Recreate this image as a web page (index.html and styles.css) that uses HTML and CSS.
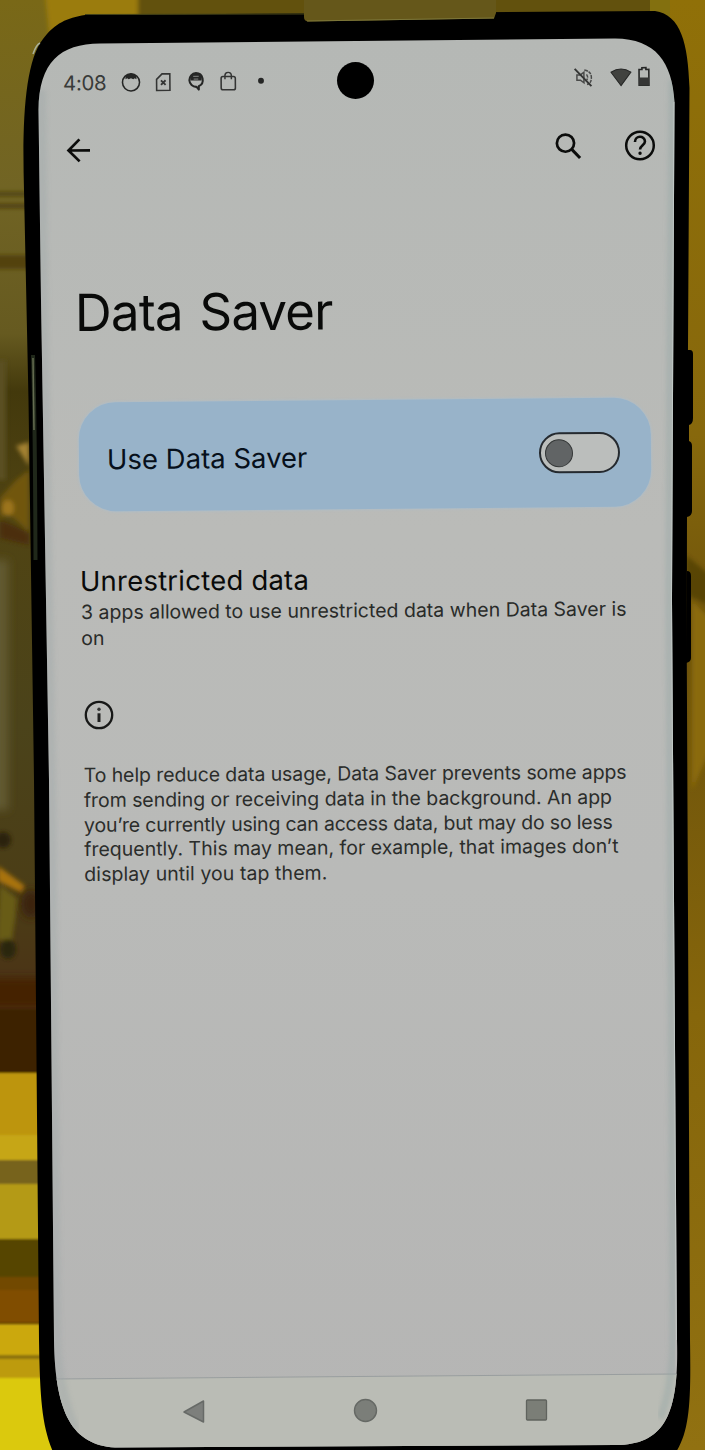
FILE: index.html
```html
<!DOCTYPE html>
<html lang="en">
<head>
<meta charset="utf-8">
<title>Data Saver</title>
<link rel="stylesheet" href="styles.css">
</head>
<body>
<div class="page">
<svg class="scene" viewBox="0 0 705 1450" aria-hidden="true">
  <defs>
    <linearGradient id="wall" x2="0" y2="1">
      <stop offset="0" stop-color="#796817"/><stop offset=".13" stop-color="#716424"/><stop offset=".23" stop-color="#665a20"/><stop offset=".27" stop-color="#43390c"/><stop offset=".36" stop-color="#504413"/><stop offset=".5" stop-color="#4b431a"/><stop offset=".62" stop-color="#4b3d16"/><stop offset=".7" stop-color="#4b3016"/><stop offset=".735" stop-color="#3b2004"/>
    </linearGradient>
    <linearGradient id="right" x2="0" y2="1">
      <stop offset="0" stop-color="#907008"/><stop offset=".3" stop-color="#87680c"/><stop offset=".45" stop-color="#6c520c"/><stop offset=".7" stop-color="#86660b"/><stop offset="1" stop-color="#917111"/>
    </linearGradient>
    <linearGradient id="glass" x2="0" y2="1">
      <stop offset="0" stop-color="#b5b8b5"/><stop offset=".35" stop-color="#babbb8"/><stop offset=".6" stop-color="#b9bab8"/><stop offset="1" stop-color="#b5b5b4"/>
    </linearGradient>
    <filter id="soft"><feGaussianBlur stdDeviation="2"/></filter>
    <filter id="softer" x="-200%" width="500%"><feGaussianBlur stdDeviation="4"/></filter>
    <filter id="slight"><feGaussianBlur stdDeviation="0 1.2"/></filter>
    <clipPath id="screen"><path id="shape" d="M100 43.500L615 38.500C656 39 672 62 674.500 102L672 600L677 1340C679 1412 666 1445 616 1445L115 1447.500C73 1445 55 1414 54 1340L49 780L41 300L38.500 110C39 62 60 44 100 43.500Z"/></clipPath>
  </defs>
  <rect width="705" height="1450" fill="url(#wall)"/>
  <g filter="url(#soft)">
    <path d="M45-5H145V60H52Z" fill="#9b7c0d"/>
    <rect x="138" y="-5" width="520" height="40" fill="#625109"/>
    <rect x="-5" y="192" width="40" height="4" fill="#4b3f0e"/><rect x="-5" y="204" width="40" height="4" fill="#483b0d"/>
    <rect x="-5" y="255" width="40" height="14" fill="#53430e"/>
    <path d="M-5 360H6V480H-5Z" fill="#5a4f24"/>
    <path d="M0 498L16 480L29 470V532L16 520L6 512L0 520Z" fill="#71570e"/>
    <path d="M16 446L29 442V466Z" fill="#a48232"/>
    <ellipse cx="8" cy="508" rx="6" ry="8" fill="#9c751f"/>
    <path d="M0 520L15 526L29 533V545L0 538Z" fill="#4b2f08"/>
    <ellipse cx="3" cy="840" rx="8" ry="8" fill="#2b2408"/>
    <path d="M-2 866L25 886L22 893L-2 881Z" fill="#a9730f"/>
    <path d="M0 885L18 899L12 940H-3Z" fill="#685b15"/>
    <ellipse cx="8" cy="949" rx="8" ry="10" fill="#2c2508"/>
  </g>
  <g filter="url(#softer)">
    <path d="M-8 560H8V810H-8Z" fill="#625a33"/>
    <ellipse cx="31" cy="904" rx="10" ry="14" fill="#3a2209"/>
    <rect x="-15" y="978" width="70" height="30" fill="#452402"/>
  </g>
  <g filter="url(#slight)">
    <rect y="1009" width="60" height="64" fill="#3d2103"/>
    <rect y="1073" width="60" height="90" fill="#bd950a"/><rect y="1135" width="60" height="25" fill="#c6a612"/>
    <rect y="1160" width="60" height="24" fill="#77631c"/><rect y="1184" width="60" height="55" fill="#b49a16"/>
    <rect y="1239" width="60" height="38" fill="#574506"/><rect y="1277" width="60" height="18" fill="#724906"/><rect y="1290" width="60" height="33" fill="#804d04"/>
    <rect y="1324" width="60" height="32" fill="#cba808"/><rect y="1355" width="60" height="4" fill="#8c7207"/>
    <rect y="1359" width="60" height="19" fill="#bd9b08"/><rect y="1378" width="80" height="80" fill="#dbc90e"/>
  </g>
  <rect x="650" width="55" height="1450" fill="url(#right)"/>
  <rect x="650" width="20" height="60" fill="#83700f"/>
  <g filter="url(#soft)"><path d="M686 555L710 575V605L686 595Z" fill="#4d3d08" opacity=".7"/><path d="M692 601L710 618V750L692 790Z" fill="#8a6a11"/></g>
  <path d="M687 350H690Q693 350 693 354V418Q693 424 689 425V441Q692 442 692 446V511Q692 516 687 517V571Q691 571 691 576V658Q691 662 686 663Z"/>
  <path d="M85 15L655 11C681 15 688 43 689.500 88L686.500 600L690 1340C691 1400 690 1430 676 1452H53C42 1425 40 1400 39 1340L34 780L28.500 400L24 190C22 120 25 62 43 39C55 23 67 18 85 15Z"/>
  <path d="M85 14.500L304 14" stroke="#414019" fill="none"/>
  <path d="M304-2H496V13L494 18.500L308 21.500Q304 21 304 17Z" fill="#65571a"/><path d="M307 21L494 18" stroke="#7d773a" fill="none"/>
  <path d="M33 355Q35 420 35.500 560" stroke="#20281a" stroke-width="4" fill="none"/><path d="M33 358L34 430" stroke="#646c50" stroke-width="1.500"/>
  <path d="M33 54Q36 45 40 43" stroke="#a9b09a" stroke-width="1.500" fill="none"/>
  <use href="#shape" fill="url(#glass)"/>
  <g clip-path="url(#screen)">
    <path d="M54 1379L356 1376.500L678 1374V1450H54Z" fill="#babcb5"/>
    <path d="M54 1379L356 1376.500L678 1374" stroke="#999e9f" fill="none"/>
    <path d="M41 90L43 300L51 780L56 1340Q58 1390 75 1430" stroke="#9fa7a8" stroke-width="10" opacity=".4" fill="none" filter="url(#soft)"/>
    <path d="M672 80L670 350L669 600L673 1340Q672 1390 660 1418" stroke="#9aa9a7" stroke-width="7" opacity=".5" fill="none" filter="url(#soft)"/>
    <path d="M674.500 102L672 600L677 1340" stroke="#c9d2cf" stroke-width="2" opacity=".7" fill="none"/>
  </g>
  <circle cx="355.500" cy="80.500" r="18.500"/>
</svg>

<main class="screen">
  <header class="status tilt">
    <div class="status-left">
      <span class="clock">4:08</span>
      <svg viewBox="0 0 24 24" class="mini"><circle cx="12" cy="12.500" r="9.300" fill="none" stroke="#252625" stroke-width="1.700"/><path d="M6 5.500Q12 0 18 5.500V9L16 8L14.500 9L12 8L9.500 9L8 8L6 9Z" fill="#252625"/></svg>
      <svg viewBox="0 0 24 24" class="mini"><path d="M11 3.500H19.500V21.500H5V9.500Z" fill="none" stroke="#343534" stroke-width="1.700"/><path d="M9.800 10.500L14.800 15.500M14.800 10.500L9.800 15.500" stroke="#343534" stroke-width="2"/></svg>
      <svg viewBox="0 0 24 24" class="mini"><path d="M12 3A7.500 7.500 0 1 0 12.500 18L15 21V17.300A7.500 7.500 0 0 0 12 3Z" fill="none" stroke="#252625" stroke-width="2.200" stroke-linejoin="round"/><path d="M5.500 7Q12-1 18.500 7L18 11H6Z" fill="#252625"/><path d="M9 6.500H15M9.500 9.500H14.500" stroke="#8c8e8b" fill="none"/></svg>
      <svg viewBox="0 0 24 24" class="mini"><rect x="4.500" y="7" width="15.500" height="14.500" rx="2" fill="none" stroke="#343534" stroke-width="1.700"/><path d="M8.700 10V6A3.500 3.500 0 0 1 15.700 6V10" fill="none" stroke="#343534" stroke-width="1.600"/></svg>
      <svg viewBox="0 0 24 24" class="mini"><circle cx="12" cy="12" r="3.200" fill="#252625"/></svg>
    </div>
    <div class="status-right">
      <svg class="mute" viewBox="0 0 24 24"><path d="M4.500 9H8.500L12.500 6V18L8.500 15H4.500Z" fill="none" stroke="#494a49" stroke-width="1.700"/><path d="M13 3.500Q21 5 21 12T16 20M15.500 8.500Q18 12 15.500 15" fill="none" stroke="#494a49" stroke-width="1.700" stroke-dasharray="4 1"/><path d="M2 2L21 22" stroke="#343534" stroke-width="2.200"/></svg>
      <svg class="wifi" viewBox="0 0 22 19"><path d="M1 4.500Q11-2 21 4.500L11 18Z" fill="#41423f" stroke="#252625"/></svg>
      <svg class="battery" viewBox="0 0 12 20"><path d="M4 3V1.200H8V3H10.900V18.800H1.100V3Z" fill="none" stroke="#252625" stroke-width="1.600"/><path d="M1 11H11V19H1Z" fill="#353635"/></svg>
    </div>
  </header>

  <nav class="appbar tilt">
    <svg class="back" viewBox="0 0 26 26"><path d="M24 13H2.500M13.500 2L2.500 13L13.500 24" fill="none" stroke="#0b0c0b" stroke-width="2.700"/></svg>
    <svg class="search" viewBox="0 0 28 28"><circle cx="11.500" cy="11" r="8.600" fill="none" stroke="#0b0c0b" stroke-width="2.700"/><path d="M17.500 17L26 26" stroke="#0b0c0b" stroke-width="3"/></svg>
    <svg class="help" viewBox="0 0 32 32"><circle cx="16" cy="16" r="13.800" fill="none" stroke="#0b0c0b" stroke-width="2.500"/><path d="M11 12.500C11 5.500 21 5.800 21 12C21 15.500 16 16 16 20" fill="none" stroke="#0b0c0b" stroke-width="2.600"/><circle cx="16" cy="23.800" r="1.700" fill="#0b0c0b"/></svg>
  </nav>

  <h1 class="title tilt-text">Data Saver</h1>

  <section class="card tilt">
    <span class="card-label">Use Data Saver</span>
    <span class="toggle"><span class="knob"></span></span>
  </section>

  <section class="unrestricted tilt-text">
    <h2 class="heading">Unrestricted data</h2>
    <p class="summary"><span>3 apps allowed to use unrestricted data when Data Saver is</span><span>on</span></p>
  </section>

  <svg class="info" viewBox="0 0 30 30"><circle cx="15" cy="15" r="13.200" fill="none" stroke="#171817" stroke-width="2.300"/><path d="M15 13.300V22" stroke="#202120" stroke-width="3"/><circle cx="15" cy="9.300" r="1.700" fill="#353635"/></svg>

  <p class="description tilt-text">
    <span class="d1">To help reduce data usage, Data Saver prevents some apps</span>
    <span class="d2">from sending or receiving data in the background. An app</span>
    <span class="d3">you’re currently using can access data, but may do so less</span>
    <span>frequently. This may mean, for example, that images don’t</span>
    <span class="d5">display until you tap them.</span>
  </p>

  <footer class="navbar">
    <svg viewBox="0 0 24 26"><path d="M21.500 3V24L2 14Z" fill="#7d7f7c" stroke="#676a67" stroke-width="1.500" stroke-linejoin="round"/></svg>
    <svg viewBox="0 0 24 26"><circle cx="11.500" cy="12.500" r="11" fill="#7b7e79" stroke="#666965" stroke-width="1.400"/></svg>
    <svg viewBox="0 0 24 26"><rect x="1.500" y="2" width="20" height="20" rx="1" fill="#7b7e77" stroke="#60635e" stroke-width="1.300"/></svg>
  </footer>
</main>
</div>
</body>
</html>
```

FILE: styles.css
```css
* { box-sizing: border-box; }
body { margin: 0; font-family: Inter, "Open Sans", sans-serif; color: #090a09; }
.page { position: relative; width: 705px; height: 1450px; overflow: hidden; }
.scene { position: absolute; inset: 0; width: 705px; height: 1450px; }
.screen { position: relative; display: flex; flex-direction: column; height: 1450px; padding-top: 62px; }
.screen svg { display: block; flex: none; overflow: visible; }
.tilt { transform: rotate(-.5deg); }
.tilt-text { transform: rotate(-.35deg); transform-origin: left center; }

.status { display: flex; justify-content: space-between; align-items: center; height: 36px; padding: 0 55px 0 63px; }
.status-left { display: flex; align-items: center; gap: 10.500px; }
.clock { width: 46px; font-size: 20.500px; letter-spacing: -.4px; color: #393b39; }
.mini { width: 22px; height: 22px; }
.status-right { display: flex; align-items: center; margin-top: -2px; }
.mute { width: 21px; height: 21px; margin-right: 16px; }
.wifi { width: 22px; height: 19px; margin-right: 6px; }
.battery { width: 12px; height: 20px; }

.appbar { display: flex; align-items: center; height: 40px; margin-top: 30px; padding: 0 49px 0 66px; }
.back { width: 26px; height: 26px; }
.search { width: 28px; height: 28px; margin-left: auto; margin-right: 42px; }
.help { width: 32px; height: 32px; }

.title { height: 64px; margin: 113px 0 0 75px; font-size: 51px; font-weight: 400; line-height: 64px; letter-spacing: -.8px; word-spacing: 3px; white-space: nowrap; }

.card { display: flex; align-items: center; justify-content: space-between; width: 572px; height: 109px; margin: 55px 0 0 79px; padding: 0 31px 0 28px; border-radius: 37px; background: #98b3c9; box-shadow: 0 0 3px #a6bfd3; }
.card-label { padding-top: 4px; font-size: 27.500px; color: #07101b; white-space: nowrap; }
.toggle { display: flex; align-items: center; width: 81px; height: 41px; padding-left: 4px; border: 2px solid #252a2f; border-radius: 21px; background: #bbbebc; }
.knob { width: 28px; height: 28px; border: 1.500px solid #343737; border-radius: 50%; background: #616465; }

.unrestricted { margin: 55px 0 0 80px; }
.heading { margin: 0; height: 34px; font-size: 27.500px; font-weight: 400; line-height: 34px; letter-spacing: .22px; white-space: nowrap; }
.summary { display: flex; flex-direction: column; margin: 1px 0 0 1px; font-size: 19.500px; line-height: 26px; color: #292b29; white-space: nowrap; }

.info { width: 30px; height: 30px; margin: 49px 0 0 84px; }

.description { display: flex; flex-direction: column; margin: 33px 0 0 84px; font-size: 19.500px; line-height: 24.800px; color: #2b2d2b; white-space: nowrap; }
.d1 { letter-spacing: -.1px; }
.d2 { letter-spacing: -.05px; }
.d3 { letter-spacing: -.2px; }
.d5 { letter-spacing: .07px; }

.navbar { display: flex; justify-content: space-between; margin: auto 156px 26px 182px; }
.navbar svg { width: 24px; height: 26px; }
```
